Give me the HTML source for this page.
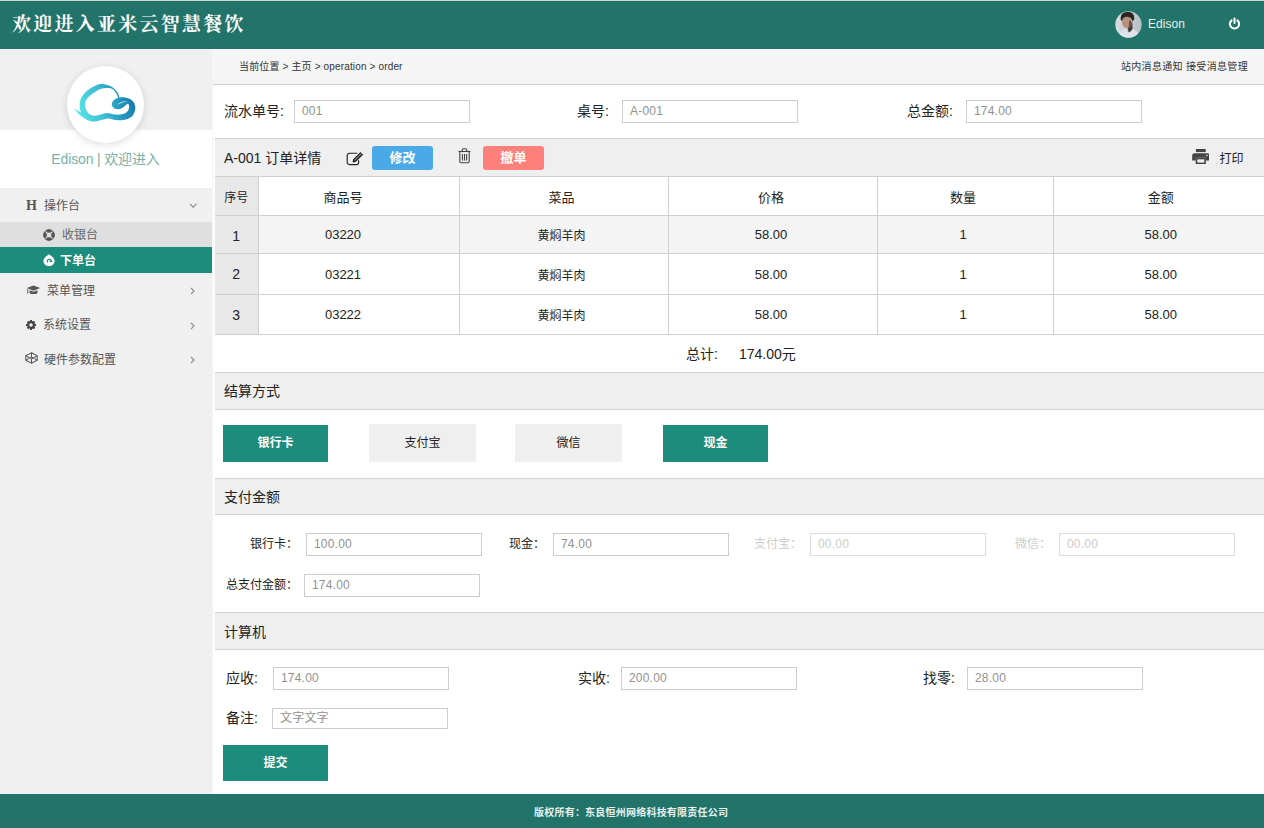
<!DOCTYPE html>
<html lang="zh-CN">
<head>
<meta charset="utf-8">
<title>亚米云智慧餐饮 - 下单台</title>
<style>
*{box-sizing:border-box;margin:0;padding:0}
html,body{width:1264px;height:828px;overflow:hidden;background:#fff}
body{position:relative;font-family:"Liberation Sans","Noto Sans CJK SC",sans-serif;color:#222;font-size:14px}
.abs{position:absolute}
#hdr{left:0;top:0;width:1264px;height:49px;background:#22746a}
#hdr h1{position:absolute;left:12px;top:0;height:49px;line-height:49px;font-family:"Liberation Serif","Noto Serif CJK SC",serif;font-weight:700;font-size:19px;letter-spacing:2.25px;color:#fff;white-space:nowrap}
#uname{left:1148px;top:16px;font-size:12px;line-height:16px;color:#e2efec;letter-spacing:.05px}
#side{left:0;top:49px;width:212px;height:746px;background:#f0f0f0}
#strip{left:0;top:130px;width:212px;height:58px;background:#fff}
#logo{left:67px;top:66px;width:77px;height:77px;border-radius:50%;background:#fff;box-shadow:0 2px 8px rgba(0,0,0,.13)}
#welcome{left:0;top:149px;width:211px;text-align:center;font-size:14px;line-height:20px;color:#78b2aa;letter-spacing:-.15px}
.mi{position:absolute;left:0;width:213px;font-size:12px;color:#555;white-space:nowrap}
.mi span{position:absolute;top:0}
#shadow{left:212px;top:49px;width:3px;height:746px;background:linear-gradient(90deg,#f4f4f4,#fdfdfd 60%)}
#crumb{left:213px;top:49px;width:1051px;height:36px;background:#f5f5f5;border-bottom:1px solid #cfcfcf}
#crumb span{position:absolute;top:0;line-height:35px;font-size:10px;color:#333;white-space:nowrap}
.sec{position:absolute;left:215px;width:1049px;background:#efefef;border-top:1px solid #d2d2d2;border-bottom:1px solid #d2d2d2}
.sec b{position:absolute;left:9px;font-weight:normal;font-size:14px;color:#222;white-space:nowrap}
.lbl{position:absolute;white-space:nowrap;color:#222;text-align:right}
.inp{position:absolute;height:23px;width:176px;letter-spacing:.2px;border:1px solid #ccc;background:#fff;font-size:12px;line-height:21px;color:#919191;padding-left:7px;white-space:nowrap}
.btn{position:absolute;text-align:center;white-space:nowrap}
table{position:absolute;left:215px;top:176px;border-collapse:collapse;table-layout:fixed;width:1049px}
td{border:1px solid #d0d0d0;text-align:center;font-size:13px;color:#222;padding:0;vertical-align:middle}
td:nth-child(1){font-size:14px}
tr.th td:nth-child(1){font-size:12px}
td:nth-child(2){padding-right:31px}
td:nth-child(3){padding-right:4px}
td:nth-child(4){padding-right:3px}
td:nth-child(5){padding-right:4px}
td:nth-child(6){padding-left:4px}
td:first-child{background:#e8e8e8;border-left:none}
td:last-child{border-right:none}
</style>
</head>
<body>
<div id="hdr" class="abs">
  <div class="abs" style="left:0;top:0;width:1264px;height:1px;background:#c4dad6"></div>
  <h1>欢迎进入亚米云智慧餐饮</h1>
  <svg class="abs" style="left:1115px;top:11px" width="27" height="27" viewBox="0 0 27 27">
    <defs><clipPath id="av"><circle cx="13.5" cy="13.5" r="13.2"/></clipPath>
    <linearGradient id="avb" x1="0" y1="0" x2="1" y2="0"><stop offset="0" stop-color="#d9dee0"/><stop offset=".5" stop-color="#c6cdd0"/><stop offset="1" stop-color="#b4c0c4"/></linearGradient>
    <filter id="avf" x="-10%" y="-10%" width="120%" height="120%"><feGaussianBlur stdDeviation=".55"/></filter></defs>
    <g clip-path="url(#av)"><rect width="27" height="27" fill="url(#avb)"/>
    <g filter="url(#avf)">
      <path d="M3 27 Q4.5 19.5 10 18.2 L13.5 21.5 L17.5 18 Q23.5 19.5 24.5 27Z" fill="#dfe4ec"/>
      <path d="M13 14 L17.2 11 L17.6 17.5 Q16.4 20.5 13.8 21.6 L12.6 17Z" fill="#433c3a"/>
      <ellipse cx="11.6" cy="10.8" rx="4.7" ry="6.2" fill="#b8927f"/>
      <path d="M5.5 8.5 Q5 1.5 12.5 .8 Q19.5 .8 19.3 8 Q18.4 10 17.2 10.4 Q16.8 6.5 12.5 5.8 Q8 5.5 7 10Z" fill="#2a2523"/>
      <path d="M14 9.5 Q17 9 16.8 13 Q16 16.5 13.5 18Z" fill="#6f554a"/>
    </g></g>
  </svg>
  <div id="uname" class="abs">Edison</div>
  <svg class="abs" style="left:1228px;top:17px" width="13" height="13" viewBox="0 0 13 13" fill="none" stroke="#fff" stroke-width="2" stroke-linecap="round">
    <path d="M3.6 3.4 A4.6 4.6 0 1 0 9.4 3.4"/><path d="M6.5 1.6 V6"/>
  </svg>
</div>

<div id="side" class="abs"></div>
<div id="strip" class="abs"></div>
<div id="logo" class="abs">
  <svg width="77" height="77" viewBox="0 0 77 77">
    <defs><linearGradient id="lg" gradientUnits="userSpaceOnUse" x1="8" y1="50" x2="67" y2="33"><stop offset="0" stop-color="#5cebea"/><stop offset=".45" stop-color="#3fbdd3"/><stop offset=".8" stop-color="#2192bd"/><stop offset="1" stop-color="#1779ab"/></linearGradient></defs>
    <path fill="url(#lg)" fill-rule="evenodd" d="M6.7 41.5 C9.5 46 12.5 49 15.8 51.2 C19 53.5 22.5 55.7 26.6 55.7 C30.5 55.7 33.5 54.2 36.3 53.6 C38 53 39.5 52.4 41.1 52.4 C44 52.4 47 54.2 50.8 54.2 C54 54.4 57.5 54.2 60.5 53 C63.5 51.7 65.5 50.2 66.5 48.2 C67.8 46 68.3 44.2 68.3 42.1 C68.3 40 67.8 38 66.5 36.1 C65 34 63 32.6 60.5 31.9 C58 31.2 55.5 31.2 52.4 31.4 C51.8 28.5 50.5 26 48.4 24 C46.5 21.8 44 20 41.1 19.2 C38.8 18.3 36.3 18 33.9 18 C31.3 18 28.8 19.3 26.6 20.6 C23.5 22.3 20.5 24.2 18.2 26.4 C16 28.5 14.3 31 13.4 33.7 C12.6 36.5 12.5 39.5 12.8 42.1 C13 43.8 13.4 45.2 14 46.4 C11.5 45.5 8.8 43.8 6.7 41.5 Z M18.6 42.1 C17.9 40.5 17.8 38.8 18.1 37.3 C18.5 35 19.5 33.2 21 31.6 C22.9 29.4 25.2 27.6 28.1 25.9 C30.7 24.3 33.4 22.7 36.3 22.3 C38.8 21.9 41.2 21.7 43.4 22.3 C45.3 22.9 46.8 24 48 25.6 C49.4 27.5 50.5 29.6 51.1 31.9 C48 32.6 45.2 34.6 44.8 37.6 C44.4 40.8 47.2 43.2 50.5 43.3 C53.7 43.4 56.2 41.4 58.2 39.7 C59.3 38.8 60.3 38 61.1 37.6 C61.9 38.7 62.2 39.9 62.1 40.9 C62 42.8 61.4 44.2 60.3 45.4 C59 46.8 57.4 47.6 55.5 48.1 C53.2 48.7 50.8 48.8 48.4 48.6 C45.5 48.4 42.8 47.1 39.9 47.1 C37.8 47.1 35.9 48 33.9 48.6 C31.5 49.4 29 50 26.7 49.7 C24.4 49.4 22.5 48.4 21 46.9 C19.7 45.6 19 43.9 18.6 42.1 Z"/>
    <path d="M50 38.9 C52 36.4 56 35 60.6 35.2 C56.5 36 53 37.2 50 38.9Z" fill="#e9f6fa"/>
  </svg>
</div>
<div id="welcome" class="abs">Edison | 欢迎进入</div>

<div class="abs" style="left:0;top:222px;width:212px;height:25px;background:#dfdfdf"></div>
<div class="abs" style="left:0;top:247px;width:212px;height:25.5px;background:#1c8c7c"></div>

<div class="mi" style="top:197px;height:18px;line-height:18px">
  <span style="left:26px;font-family:'Liberation Serif',serif;font-weight:bold;font-size:14px;color:#555">H</span>
  <span style="left:44px">操作台</span>
</div>
<svg class="abs" style="left:188.5px;top:202.6px" width="8.4" height="5.6" viewBox="0 0 9 6" fill="none" stroke="#888" stroke-width="1.2"><path d="M1 1 L4.5 4.5 L8 1"/></svg>

<svg class="abs" style="left:43px;top:229px" width="12" height="12" viewBox="0 0 12 12"><circle cx="6" cy="6" r="4" fill="none" stroke="#555" stroke-width="3.2"/><path d="M2 2 L10 10 M10 2 L2 10" stroke="#e0e0e0" stroke-width="1.1"/><circle cx="6" cy="6" r="5.3" fill="none" stroke="#555" stroke-width=".9"/></svg>
<div class="mi" style="top:226px;height:18px;line-height:18px"><span style="left:62px;color:#666">收银台</span></div>

<svg class="abs" style="left:43px;top:254px" width="12" height="12" viewBox="0 0 12 12"><path d="M6 .3 C8 2 11.6 4 11.6 7 A5.6 5.2 0 0 1 .4 7 C.4 4 4 2 6 .3Z" fill="#fff"/><path d="M4.5 8.6 A2.2 2.2 0 1 1 8.6 7.4 L6.5 7.4" fill="none" stroke="#1c8c7c" stroke-width="1.1"/></svg>
<div class="mi" style="top:252px;height:18px;line-height:18px"><span style="left:60px;color:#fff;font-weight:bold">下单台</span></div>

<svg class="abs" style="left:26px;top:285px" width="15" height="11" viewBox="0 0 15 12"><path d="M7.5 .5 L14.8 3.4 L7.5 6.3 L.2 3.4Z" fill="#555"/><path d="M3.2 5.6 V8.6 C5 10.4 10 10.4 11.8 8.6 V5.6 L7.5 7.4Z" fill="#555"/><path d="M1.2 4 V9.5" stroke="#555" stroke-width="1"/></svg>
<div class="mi" style="top:282px;height:18px;line-height:18px"><span style="left:47px">菜单管理</span></div>
<svg class="abs" style="left:189.5px;top:287px" width="5.4" height="8" viewBox="0 0 6 9" fill="none" stroke="#888" stroke-width="1.2"><path d="M1 1 L4.5 4.5 L1 8"/></svg>

<svg class="abs" style="left:26px;top:320px" width="10" height="10" viewBox="0 0 11 11"><circle cx="5.5" cy="5.5" r="3.1" fill="none" stroke="#444" stroke-width="2.4"/><g stroke="#444" stroke-width="2.2"><path d="M5.5 0 V11"/><path d="M0 5.5 H11"/><path d="M1.6 1.6 L9.4 9.4"/><path d="M9.4 1.6 L1.6 9.4"/></g><circle cx="5.5" cy="5.5" r="2" fill="#f0f0f0"/></svg>
<div class="mi" style="top:316px;height:18px;line-height:18px"><span style="left:43px">系统设置</span></div>
<svg class="abs" style="left:189.5px;top:322px" width="5.4" height="8" viewBox="0 0 6 9" fill="none" stroke="#888" stroke-width="1.2"><path d="M1 1 L4.5 4.5 L1 8"/></svg>

<svg class="abs" style="left:25px;top:352px" width="13" height="12" viewBox="0 0 14 13" fill="none" stroke="#555" stroke-width="1.1"><path d="M7 .8 L13.2 4.2 V8.8 L7 12.2 L.8 8.8 V4.2Z"/><path d="M.8 4.2 L7 7.6 L13.2 4.2 M.8 8.8 L7 5.4 L13.2 8.8 M7 .8 V5.4 M7 7.6 V12.2"/></svg>
<div class="mi" style="top:351px;height:18px;line-height:18px"><span style="left:44px">硬件参数配置</span></div>
<svg class="abs" style="left:189.5px;top:356px" width="5.4" height="8" viewBox="0 0 6 9" fill="none" stroke="#888" stroke-width="1.2"><path d="M1 1 L4.5 4.5 L1 8"/></svg>

<div id="shadow" class="abs"></div>
<div id="crumb" class="abs">
  <span style="left:26px;letter-spacing:.15px">当前位置 &gt; 主页 &gt; operation &gt; order</span>
  <span style="right:16px;letter-spacing:.33px">站内消息通知 接受消息管理</span>
</div>

<!-- top form -->
<div class="lbl" style="left:224px;top:101px;line-height:20px;font-size:14px">流水单号:</div>
<div class="inp" style="left:294px;top:100px">001</div>
<div class="lbl" style="left:577px;top:101px;line-height:20px;font-size:14px">桌号:</div>
<div class="inp" style="left:622px;top:100px">A-001</div>
<div class="lbl" style="left:907px;top:101px;line-height:20px;font-size:14px">总金额:</div>
<div class="inp" style="left:966px;top:100px">174.00</div>

<!-- order detail header -->
<div class="sec" style="top:138px;height:39px;border-bottom:none"><b style="top:9px;line-height:20px">A-001 订单详情</b></div>
<svg class="abs" style="left:346px;top:151px" width="20" height="15" viewBox="0 0 20 15" fill="none" stroke="#222" stroke-width="1.15"><path d="M12.6 9.2 V11.4 A2.2 2.2 0 0 1 10.4 13.6 H3.4 A2.2 2.2 0 0 1 1.2 11.4 V4.4 A2.2 2.2 0 0 1 3.4 2.2 H11.2"/><path d="M7 11 L7.7 8.2 L14.4 1.5 L16.6 3.7 L9.9 10.4Z" fill="#3a3a3a" stroke-width="1" stroke-linejoin="round"/><path d="M8.6 9.2 L15.3 2.5" stroke="#bbb" stroke-width=".7"/><path d="M7 11 L7.5 8.9 L9.2 10.5Z" fill="#222" stroke="none"/></svg>
<div class="btn" style="left:372px;top:146px;width:61px;height:24px;line-height:24px;background:#4aaae8;border-radius:3px;color:#fff;font-weight:bold;font-size:13px">修改</div>
<svg class="abs" style="left:458px;top:148px" width="13" height="16" viewBox="0 0 13 16" fill="none" stroke="#444" stroke-width="1.1"><path d="M.5 3.5 H12.5"/><path d="M4.3 3.3 V1.8 A1 1 0 0 1 5.3 .8 H7.7 A1 1 0 0 1 8.7 1.8 V3.3"/><path d="M1.8 3.8 V13.6 A1.2 1.2 0 0 0 3 14.8 H10 A1.2 1.2 0 0 0 11.2 13.6 V3.8"/><path d="M4.4 6 V12.4 M6.5 6 V12.4 M8.6 6 V12.4"/></svg>
<div class="btn" style="left:483px;top:146px;width:61px;height:24px;line-height:24px;background:#fe807b;border-radius:3px;color:#fff;font-weight:bold;font-size:13px">撤单</div>
<svg class="abs" style="left:1191.5px;top:148.8px" width="17.6" height="15.4" viewBox="0 0 18 17" preserveAspectRatio="none"><rect x="4" y="0" width="10" height="3.4" fill="#444"/><path d="M2.5 4.6 H15.5 A2.3 2.3 0 0 1 17.8 6.9 V12.6 H14.2 V9.6 H3.8 V12.6 H.2 V6.9 A2.3 2.3 0 0 1 2.5 4.6Z" fill="#444"/><rect x="4.6" y="10.6" width="8.8" height="5.2" fill="none" stroke="#444" stroke-width="1.6"/><circle cx="15.2" cy="7.2" r=".9" fill="#efefef"/></svg>
<div class="lbl" style="left:1219.6px;top:150px;line-height:18px;font-size:12px">打印</div>

<!-- table -->
<table>
<colgroup><col style="width:43px"><col style="width:201px"><col style="width:209px"><col style="width:209px"><col style="width:176px"><col style="width:211px"></colgroup>
<tr class="th" style="height:39px"><td>序号</td><td>商品号</td><td>菜品</td><td>价格</td><td>数量</td><td>金额</td></tr>
<tr style="height:38px;background:#f4f4f4"><td style="padding-top:2px">1</td><td>03220</td><td style="font-size:12px">黄焖羊肉</td><td>58.00</td><td>1</td><td>58.00</td></tr>
<tr style="height:41px"><td>2</td><td>03221</td><td style="font-size:12px">黄焖羊肉</td><td>58.00</td><td>1</td><td>58.00</td></tr>
<tr style="height:40px"><td>3</td><td>03222</td><td style="font-size:12px">黄焖羊肉</td><td>58.00</td><td>1</td><td>58.00</td></tr>
</table>
<div class="lbl" style="left:686px;top:344px;line-height:20px;font-size:14px">总计:</div>
<div class="lbl" style="left:739px;top:344px;line-height:20px;font-size:14px">174.00元</div>

<!-- settle -->
<div class="sec" style="top:372px;height:38px"><b style="top:8px;line-height:20px">结算方式</b></div>
<div class="btn" style="left:223px;top:425px;width:105px;height:37px;line-height:37px;background:#1c8c7c;color:#fff;font-weight:bold;font-size:12px">银行卡</div>
<div class="btn" style="left:369px;top:424px;width:107px;height:38px;line-height:38px;background:#efefef;color:#222;font-size:12px">支付宝</div>
<div class="btn" style="left:515px;top:424px;width:107px;height:38px;line-height:38px;background:#efefef;color:#222;font-size:12px">微信</div>
<div class="btn" style="left:663px;top:425px;width:105px;height:37px;line-height:37px;background:#1c8c7c;color:#fff;font-weight:bold;font-size:12px">现金</div>

<!-- pay amount -->
<div class="sec" style="top:478px;height:37px"><b style="top:8px;line-height:20px">支付金额</b></div>
<div class="lbl" style="left:250px;top:535px;line-height:18px;font-size:12px">银行卡：</div>
<div class="inp" style="left:306px;top:533px">100.00</div>
<div class="lbl" style="left:509px;top:535px;line-height:18px;font-size:12px">现金：</div>
<div class="inp" style="left:553px;top:533px">74.00</div>
<div class="lbl" style="left:754px;top:535px;line-height:18px;font-size:12px;color:#ccc">支付宝：</div>
<div class="inp" style="left:810px;top:533px;border-color:#ddd;color:#ccc">00.00</div>
<div class="lbl" style="left:1015px;top:535px;line-height:18px;font-size:12px;color:#ccc">微信：</div>
<div class="inp" style="left:1059px;top:533px;border-color:#ddd;color:#ccc">00.00</div>
<div class="lbl" style="left:226px;top:576px;line-height:18px;font-size:12px">总支付金额：</div>
<div class="inp" style="left:304px;top:574px">174.00</div>

<!-- calc -->
<div class="sec" style="top:612px;height:38px"><b style="top:9px;line-height:20px">计算机</b></div>
<div class="lbl" style="left:226px;top:668px;line-height:20px;font-size:14px">应收:</div>
<div class="inp" style="left:273px;top:667px">174.00</div>
<div class="lbl" style="left:578px;top:668px;line-height:20px;font-size:14px">实收:</div>
<div class="inp" style="left:621px;top:667px">200.00</div>
<div class="lbl" style="left:923px;top:668px;line-height:20px;font-size:14px">找零:</div>
<div class="inp" style="left:967px;top:667px">28.00</div>
<div class="lbl" style="left:226px;top:708px;line-height:20px;font-size:14px">备注:</div>
<div class="inp" style="left:272px;top:708px;height:21px;line-height:19px">文字文字</div>
<div class="btn" style="left:223px;top:745px;width:105px;height:36px;line-height:36px;background:#1c8c7c;color:#fff;font-weight:bold;font-size:12px">提交</div>

<div class="abs" style="left:0;top:794px;width:1264px;height:34px;background:#22746a;color:#e6f1ef;font-size:10px;font-weight:bold;line-height:37px;white-space:nowrap"><span style="position:absolute;left:534px;letter-spacing:.22px">版权所有：东良恒州网络科技有限责任公司</span></div>
</body>
</html>
